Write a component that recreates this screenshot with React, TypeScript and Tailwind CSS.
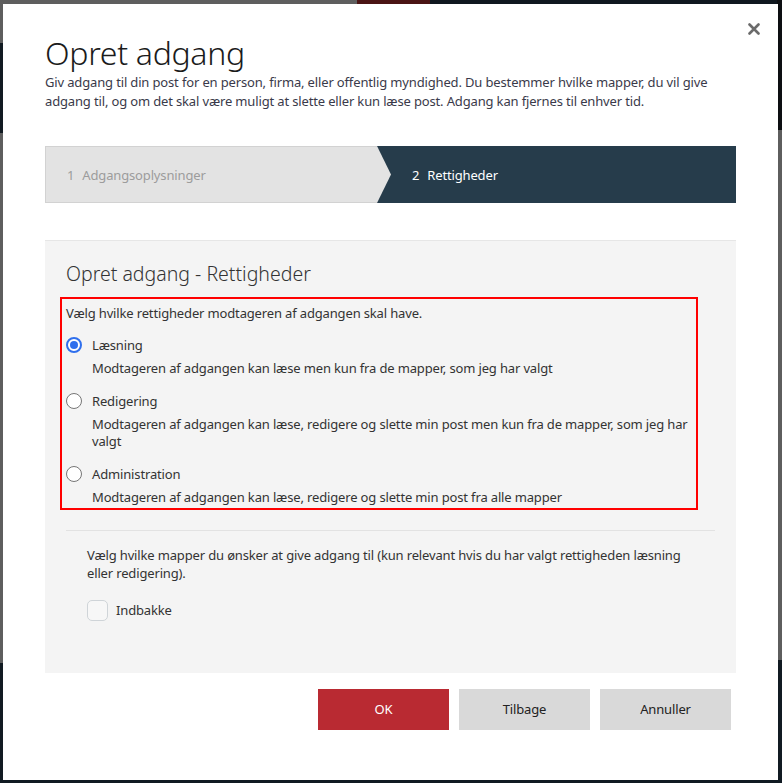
import React from "react";

const font = { fontFamily: '"Noto Sans", "Open Sans", sans-serif' };

function Radio({ checked }: { checked?: boolean }) {
  return checked ? (
    <span className="flex h-[16px] w-[16px] shrink-0 items-center justify-center rounded-full border-[2px] border-[#2f6fed] bg-white">
      <span className="h-[8px] w-[8px] rounded-full bg-[#2f6fed]" />
    </span>
  ) : (
    <span className="h-[16px] w-[16px] shrink-0 rounded-full border border-[#767676] bg-white" />
  );
}

function Option({
  label,
  desc,
  checked,
}: {
  label: string;
  desc: string;
  checked?: boolean;
}) {
  return (
    <div className="flex flex-col">
      <div className="flex items-center gap-[10px]">
        <Radio checked={checked} />
        <span className="text-[13px] leading-[20px] text-[#333]">{label}</span>
      </div>
      <p className="mt-[5px] pl-[26px] text-[13px] leading-[17px] text-[#333]">{desc}</p>
    </div>
  );
}

export default function App() {
  return (
    <div
      className="relative h-[783px] w-[782px] overflow-hidden bg-[#5e5e5e] tracking-[-0.15px]"
      style={font}
    >
      {/* page behind the overlay */}
      <div className="absolute left-[357px] top-0 h-[6px] w-[73px] bg-[#4a1414]" />
      <div className="absolute left-[430px] top-0 h-[6px] w-[352px] bg-[#10181f]" />
      <div className="absolute left-0 top-[43px] h-[90px] w-[4px] bg-[#111a22]" />
      <div className="absolute left-0 top-[663px] h-[120px] w-[4px] bg-[#111a22]" />
      <div className="absolute right-0 top-0 h-[130px] w-[5px] bg-[#0d0f12]" />
      <div className="absolute right-0 top-[660px] h-[123px] w-[5px] bg-[#111a22]" />
      <div className="absolute bottom-0 left-0 h-[4px] w-[782px] bg-[#101a22]" />

      {/* dialog */}
      <div className="relative ml-[3px] mt-[4px] flex h-[776px] w-[775px] flex-col bg-white px-[42px]">
        <button className="absolute right-[15px] top-[16px] flex h-[18px] w-[18px] items-center justify-center text-[#6b6b6b]">
          <svg width="12" height="12" viewBox="0 0 12 12">
            <path d="M1.5 1.5 L10.5 10.5 M10.5 1.5 L1.5 10.5" stroke="currentColor" strokeWidth="2.6" strokeLinecap="round" />
          </svg>
        </button>

        <h1 className="mt-[29px] text-[32px] font-light leading-[40px] tracking-[-0.3px] text-[#1b1b1b]">Opret adgang</h1>
        <p className="mt-0 text-[13px] leading-[19px] text-[#3a3a4a]">
          Giv adgang til din post for en person, firma, eller offentlig myndighed. Du bestemmer hvilke mapper, du vil give
          adgang til, og om det skal være muligt at slette eller kun læse post. Adgang kan fjernes til enhver tid.
        </p>

        {/* steps */}
        <div className="mt-[35px] flex h-[57px]">
          <div className="relative flex flex-1 items-center border border-r-0 border-[#d2d2d2] bg-[#e3e3e3] pl-[21px] pt-[3px] text-[13px] text-[#9c9c9c]">
            <span>1</span>
            <span className="ml-[8px]">Adgangsoplysninger</span>
          </div>
          <div className="relative flex w-[359px] items-center bg-[#263c4b] pl-[35px] pt-[3px] text-[13px] text-white">
            <svg className="absolute left-0 top-0" width="15" height="57" viewBox="0 0 15 57">
              <path d="M0 0 L14 28.5 L0 57 Z" fill="#e3e3e3" />
            </svg>
            <span>2</span>
            <span className="ml-[8px]">Rettigheder</span>
          </div>
        </div>

        {/* rights panel */}
        <div className="mt-[37px] flex h-[433px] flex-col border-t border-[#e6e6e6] bg-[#f4f4f4] px-[15px]">
          <h2 className="mt-[20px] pl-[6px] text-[19.5px] font-light leading-[26px] tracking-normal text-[#333]">
            Opret adgang - Rettigheder
          </h2>

          <div className="mr-[23px] mt-[10px] flex h-[213px] flex-col border-[2px] border-[#ff0000] pl-[4px] pr-[4px]">
            <p className="mt-[4px] text-[13px] leading-[20px] text-[#333]">
              Vælg hvilke rettigheder modtageren af adgangen skal have.
            </p>
            <div className="mt-[12px] flex flex-col gap-[14px]">
              <Option
                checked
                label="Læsning"
                desc="Modtageren af adgangen kan læse men kun fra de mapper, som jeg har valgt"
              />
              <Option
                label="Redigering"
                desc="Modtageren af adgangen kan læse, redigere og slette min post men kun fra de mapper, som jeg har valgt"
              />
              <Option
                label="Administration"
                desc="Modtageren af adgangen kan læse, redigere og slette min post fra alle mapper"
              />
            </div>
          </div>

          <div className="mx-[6px] mt-[20px] border-t border-[#e2e2e2]" />

          <div className="pl-[27px] pr-[30px]">
            <p className="mt-[15px] text-[13px] leading-[18px] text-[#333]">
              Vælg hvilke mapper du ønsker at give adgang til (kun relevant hvis du har valgt rettigheden læsning
              eller redigering).
            </p>
            <label className="mt-[18px] flex items-center gap-[8px]">
              <span className="h-[21px] w-[21px] rounded-[5px] border border-[#cfd4d8] bg-[#f7f7f7]" />
              <span className="text-[13px] text-[#333]">Indbakke</span>
            </label>
          </div>
        </div>

        {/* actions */}
        <div className="mt-[16px] flex justify-end gap-[10px] pr-[5px]">
          <button className="h-[41px] w-[131px] bg-[#b92a32] text-[13px] text-white">OK</button>
          <button className="h-[41px] w-[131px] bg-[#d9d9d9] text-[13px] text-[#222]">Tilbage</button>
          <button className="h-[41px] w-[131px] bg-[#d9d9d9] text-[13px] text-[#222]">Annuller</button>
        </div>
      </div>
    </div>
  );
}
